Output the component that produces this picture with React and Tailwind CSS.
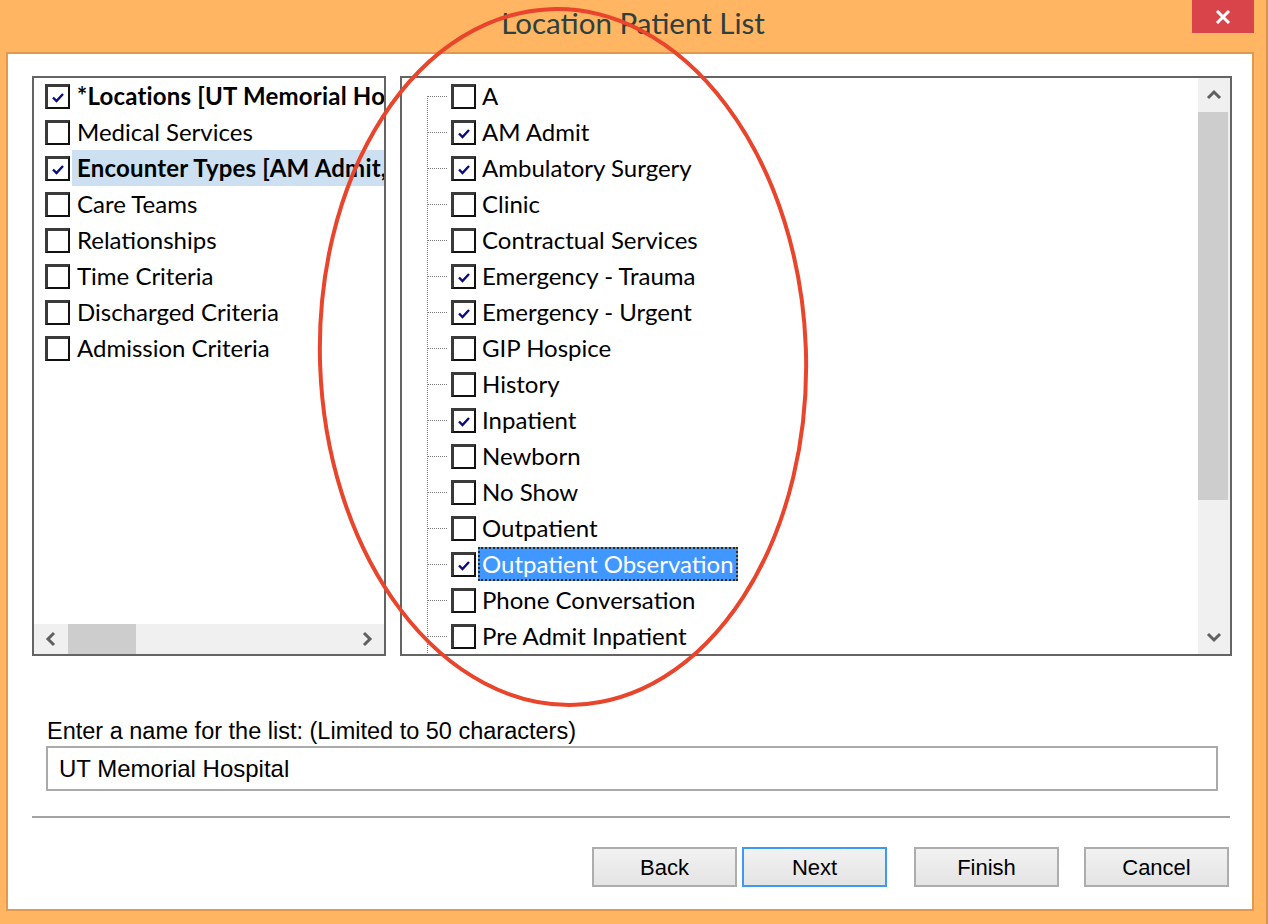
import React from "react";

const UI = { fontFamily: "Lato, 'Noto Sans', sans-serif" };
const MS = { fontFamily: "'Liberation Sans', Arial, sans-serif" };

const CATEGORIES = [
  { label: "*Locations [UT Memorial Hospital]", checked: true, bold: true },
  { label: "Medical Services" },
  { label: "Encounter Types [AM Admit, Ambulatory Surgery]", checked: true, bold: true, selected: true },
  { label: "Care Teams" },
  { label: "Relationships" },
  { label: "Time Criteria" },
  { label: "Discharged Criteria" },
  { label: "Admission Criteria" },
];

const ENCOUNTERS = [
  { label: "A" },
  { label: "AM Admit", checked: true },
  { label: "Ambulatory Surgery", checked: true },
  { label: "Clinic" },
  { label: "Contractual Services" },
  { label: "Emergency - Trauma", checked: true },
  { label: "Emergency - Urgent", checked: true },
  { label: "GIP Hospice" },
  { label: "History" },
  { label: "Inpatient", checked: true },
  { label: "Newborn" },
  { label: "No Show" },
  { label: "Outpatient" },
  { label: "Outpatient Observation", checked: true, focused: true },
  { label: "Phone Conversation" },
  { label: "Pre Admit Inpatient" },
];

function CheckBox({ checked }) {
  return (
    <span className="shrink-0 w-[25px] h-[25px] border-2 border-[#111] border-l-[3px] border-t-[3px] border-l-[#3a3a3a] border-t-[#3a3a3a] bg-white flex items-center justify-center">
      {checked && (
        <svg width="16" height="14" viewBox="0 0 16 14">
          <path d="M3 7.5 L6.5 11 L13 4" fill="none" stroke="#0a0a80" strokeWidth="2.4" />
        </svg>
      )}
    </span>
  );
}

function Chevron({ dir }) {
  const paths = {
    up: "M2 9 L8 3 L14 9",
    down: "M2 3 L8 9 L14 3",
    left: "M9 2 L3 8 L9 14",
    right: "M3 2 L9 8 L3 14",
  };
  const horiz = dir === "left" || dir === "right";
  return (
    <svg width={horiz ? 12 : 16} height={horiz ? 16 : 12} viewBox={horiz ? "0 0 12 16" : "0 0 16 12"}>
      <path d={paths[dir]} fill="none" stroke="#606060" strokeWidth="3" />
    </svg>
  );
}

function TreeLine({ first }) {
  return (
    <svg width="25" height="36" className="shrink-0">
      <line x1="1.5" y1={first ? 18 : 0} x2="1.5" y2="36" stroke="#7a7a7a" strokeWidth="1" strokeDasharray="1 1" />
      <line x1="2" y1="18.5" x2="22" y2="18.5" stroke="#7a7a7a" strokeWidth="1" strokeDasharray="1 1" />
    </svg>
  );
}

function CategoryList() {
  return (
    <div className="w-[354px] h-[580px] border-2 border-[#646464] flex flex-col bg-white">
      <div className="flex-1 overflow-hidden">
        {CATEGORIES.map((c) => (
          <div key={c.label} className="h-[36px] flex items-center pl-[11px]">
            <CheckBox checked={c.checked} />
            <span
              className={`ml-[2px] h-full flex-1 flex items-center pl-[5px] whitespace-nowrap overflow-hidden text-[24px] text-black ${
                c.bold ? "font-bold tracking-[0.2px]" : ""
              } ${c.selected ? "bg-[#cce0f2]" : ""}`}
              style={UI}
            >
              {c.label}
            </span>
          </div>
        ))}
      </div>
      <div className="h-[30px] bg-[#f0f0f0] flex items-center">
        <span className="w-[34px] flex justify-center">
          <Chevron dir="left" />
        </span>
        <span className="w-[68px] h-full bg-[#cdcdcd]" />
        <span className="flex-1" />
        <span className="w-[34px] flex justify-center">
          <Chevron dir="right" />
        </span>
      </div>
    </div>
  );
}

function EncounterList() {
  return (
    <div className="w-[832px] h-[580px] border-2 border-[#646464] flex bg-white">
      <div className="flex-1 overflow-hidden">
        {ENCOUNTERS.map((e, i) => (
          <div key={e.label} className="h-[36px] flex items-center pl-[24px]">
            <TreeLine first={i === 0} />
            <CheckBox checked={e.checked} />
            <span
              className={`ml-[2px] h-[34px] flex items-center px-[4px] whitespace-nowrap text-[24px] ${
                e.focused
                  ? "bg-[#3f97ff] text-white outline-2 outline-dotted outline-[#3a2a10] -outline-offset-2"
                  : "text-black"
              }`}
              style={UI}
            >
              {e.label}
            </span>
          </div>
        ))}
      </div>
      <div className="w-[32px] bg-[#f0f0f0] flex flex-col">
        <span className="h-[34px] flex items-center justify-center">
          <Chevron dir="up" />
        </span>
        <span className="h-[388px] mr-[2px] bg-[#cdcdcd]" />
        <span className="flex-1" />
        <span className="h-[34px] flex items-center justify-center">
          <Chevron dir="down" />
        </span>
      </div>
    </div>
  );
}

function WinButton({ children, primary }) {
  return (
    <button
      className={`w-[145px] h-[40px] border-2 bg-gradient-to-b from-[#f2f2f2] to-[#e4e4e4] text-[22px] text-black ${
        primary ? "border-[#3c9af5]" : "border-[#adadad]"
      }`}
      style={MS}
    >
      {children}
    </button>
  );
}

export default function App() {
  return (
    <div className="relative w-[1268px] h-[924px] bg-[#ffb562] border-r-2 border-[#d9914d] overflow-hidden">
      {/* title bar */}
      <div className="h-[52px] grid grid-cols-[1fr_auto_1fr]">
        <div />
        <div className="text-[29.5px] leading-[46px] text-[#2d3f3f] whitespace-nowrap" style={UI}>
          Location Patient List
        </div>
        <div className="flex justify-end items-start pr-[12px]">
          <span className="w-[62px] h-[33px] bg-[#d9444b] flex items-center justify-center">
            <svg width="16" height="14" viewBox="0 0 16 14">
              <path d="M2 1 L14 13 M14 1 L2 13" stroke="white" strokeWidth="3" />
            </svg>
          </span>
        </div>
      </div>

      {/* client area */}
      <div className="ml-[6px] mr-[12px] h-[859px] border-2 border-[#e1994f] bg-white flex flex-col">
        <div className="mt-[22px] ml-[24px] flex gap-[14px]">
          <CategoryList />
          <EncounterList />
        </div>

        <label className="mt-[62px] ml-[39px] h-[26px] leading-[26px] text-[23.5px] text-black" style={MS}>
          Enter a name for the list: (Limited to 50 characters)
        </label>
        <div
          className="mt-[2px] ml-[38px] w-[1172px] h-[45px] border-2 border-[#aaaaaa] flex items-center pl-[11px] text-[24px] text-black"
          style={MS}
        >
          UT Memorial Hospital
        </div>

        <div className="mt-[25px] ml-[24px] w-[1198px] h-[2px] bg-[#a3a3a3]" />

        <div className="mt-[29px] mr-[23px] flex justify-end">
          <WinButton>Back</WinButton>
          <div className="ml-[5px]">
            <WinButton primary>Next</WinButton>
          </div>
          <div className="ml-[27px]">
            <WinButton>Finish</WinButton>
          </div>
          <div className="ml-[25px]">
            <WinButton>Cancel</WinButton>
          </div>
        </div>
      </div>

      {/* red annotation ellipse */}
      <svg className="absolute inset-0 pointer-events-none" width="1268" height="924">
        <ellipse
          cx="563"
          cy="357"
          rx="243"
          ry="348"
          fill="none"
          stroke="#e8452c"
          strokeWidth="4"
          transform="rotate(-2 563 357)"
        />
      </svg>
    </div>
  );
}
